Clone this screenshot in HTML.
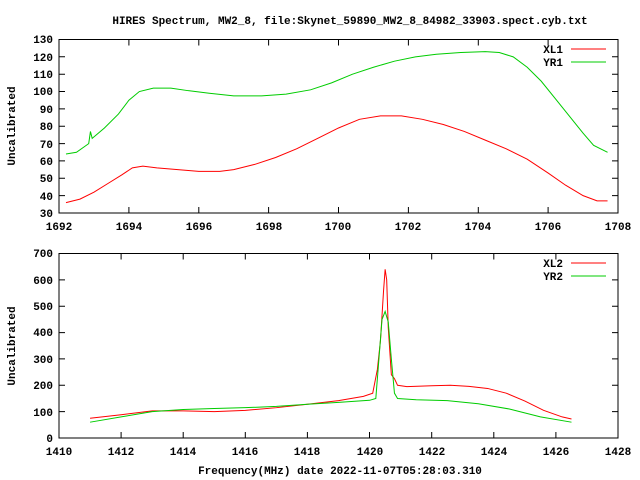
<!DOCTYPE html>
<html><head><style>body{margin:0;background:#fff}svg{display:block}text{font-family:"Liberation Mono",monospace;font-weight:bold;font-size:11px;fill:#000}</style></head><body>
<svg width="640" height="480" xmlns="http://www.w3.org/2000/svg">
<text x="350" y="24" text-anchor="middle">HIRES Spectrum, MW2_8, file:Skynet_59890_MW2_8_84982_33903.spect.cyb.txt</text>
<!-- top frame -->
<rect x="59" y="39.5" width="559" height="173.5" fill="none" stroke="#000"/>
<g stroke="#000">
<path d="M59 195.6h6M612 195.6h6M59 178.3h6M612 178.3h6M59 160.9h6M612 160.9h6M59 143.6h6M612 143.6h6M59 126.2h6M612 126.2h6M59 108.9h6M612 108.9h6M59 91.5h6M612 91.5h6M59 74.2h6M612 74.2h6M59 56.8h6M612 56.8h6"/>
<path d="M128.9 213v-6M128.9 39.5v6M198.8 213v-6M198.8 39.5v6M268.6 213v-6M268.6 39.5v6M338.5 213v-6M338.5 39.5v6M408.4 213v-6M408.4 39.5v6M478.3 213v-6M478.3 39.5v6M548.1 213v-6M548.1 39.5v6"/>
</g>
<g text-anchor="end">
<text x="53" y="217">30</text><text x="53" y="200">40</text><text x="53" y="182">50</text><text x="53" y="165">60</text><text x="53" y="148">70</text><text x="53" y="130">80</text><text x="53" y="113">90</text><text x="53" y="95">100</text><text x="53" y="78">110</text><text x="53" y="61">120</text><text x="53" y="43">130</text>
</g>
<g text-anchor="middle">
<text x="59" y="230">1692</text><text x="129" y="230">1694</text><text x="199" y="230">1696</text><text x="269" y="230">1698</text><text x="338" y="230">1700</text><text x="408" y="230">1702</text><text x="478" y="230">1704</text><text x="548" y="230">1706</text><text x="618" y="230">1708</text>
</g>
<text transform="translate(15,126) rotate(-90)" text-anchor="middle">Uncalibrated</text>
<text x="563" y="53" text-anchor="end">XL1</text><path d="M571 49h35" stroke="#f00"/>
<text x="563" y="66" text-anchor="end">YR1</text><path d="M571 62h35" stroke="#0c0"/>
<g transform="translate(59,213) scale(34.94,-1.735) translate(-1692,-30)" fill="none">
<polyline vector-effect="non-scaling-stroke" stroke="#f00" points="1692.2,36 1692.6,38 1693,42 1693.4,47 1693.8,52 1694.1,56 1694.4,57 1694.8,56 1695.4,55 1696,54 1696.6,54 1697,55 1697.6,58 1698.2,62 1698.8,67 1699.4,73 1700,79 1700.6,84 1701.2,86 1701.8,86 1702.4,84 1703,81 1703.6,77 1704.2,72 1704.8,67 1705.4,61 1706,53 1706.5,46 1707,40 1707.4,37 1707.7,37"/>
<polyline vector-effect="non-scaling-stroke" stroke="#0c0" points="1692.2,64 1692.5,65 1692.85,70 1692.9,77 1692.95,73 1693.3,79 1693.7,87 1694,95 1694.3,100 1694.7,102 1695.2,102 1695.7,100.5 1696.3,99 1697,97.5 1697.8,97.5 1698.5,98.5 1699.2,101 1699.8,105 1700.4,110 1701,114 1701.6,117.5 1702.2,120 1702.8,121.5 1703.5,122.5 1704.2,123 1704.6,122.5 1705,120 1705.4,114 1705.8,106 1706.2,96 1706.6,86 1707,76 1707.3,69 1707.7,65"/>
</g>
<!-- bottom frame -->
<rect x="59" y="253.5" width="559" height="184.5" fill="none" stroke="#000"/>
<g stroke="#000">
<path d="M59 411.6h6M612 411.6h6M59 385.3h6M612 385.3h6M59 358.9h6M612 358.9h6M59 332.6h6M612 332.6h6M59 306.2h6M612 306.2h6M59 279.9h6M612 279.9h6"/>
<path d="M121.1 438v-6M121.1 253.5v6M183.2 438v-6M183.2 253.5v6M245.3 438v-6M245.3 253.5v6M307.4 438v-6M307.4 253.5v6M369.5 438v-6M369.5 253.5v6M431.7 438v-6M431.7 253.5v6M493.8 438v-6M493.8 253.5v6M555.9 438v-6M555.9 253.5v6"/>
</g>
<g text-anchor="end">
<text x="53" y="442">0</text><text x="53" y="416">100</text><text x="53" y="389">200</text><text x="53" y="363">300</text><text x="53" y="336">400</text><text x="53" y="310">500</text><text x="53" y="284">600</text><text x="53" y="257">700</text>
</g>
<g text-anchor="middle">
<text x="59" y="455">1410</text><text x="121" y="455">1412</text><text x="183" y="455">1414</text><text x="245" y="455">1416</text><text x="307" y="455">1418</text><text x="370" y="455">1420</text><text x="432" y="455">1422</text><text x="494" y="455">1424</text><text x="556" y="455">1426</text><text x="618" y="455">1428</text>
</g>
<text transform="translate(15,346) rotate(-90)" text-anchor="middle">Uncalibrated</text>
<text x="340" y="474" text-anchor="middle">Frequency(MHz) date 2022-11-07T05:28:03.310</text>
<text x="563" y="267" text-anchor="end">XL2</text><path d="M571 263h35" stroke="#f00"/>
<text x="563" y="280" text-anchor="end">YR2</text><path d="M571 276h35" stroke="#0c0"/>
<g transform="translate(59,438) scale(31.06,-0.2636) translate(-1410,0)" fill="none">
<polyline vector-effect="non-scaling-stroke" stroke="#f00" points="1411,75 1412,88 1413,103 1414,103 1415,100 1416,105 1417,115 1418,128 1419,142 1419.8,158 1420.1,170 1420.25,260 1420.35,370 1420.45,560 1420.5,640 1420.55,600 1420.6,420 1420.7,240 1420.8,225 1420.9,200 1421.2,195 1422,198 1422.6,200 1423.2,196 1423.8,188 1424.4,170 1425,140 1425.6,105 1426.2,80 1426.5,72"/>
<polyline vector-effect="non-scaling-stroke" stroke="#0c0" points="1411,60 1412,80 1413,100 1414,108 1415,112 1416,115 1417,120 1418,128 1419,135 1420,143 1420.2,150 1420.3,300 1420.4,450 1420.5,480 1420.6,440 1420.7,300 1420.8,170 1420.9,150 1421.5,145 1422.5,142 1423.5,130 1424.5,110 1425.5,80 1426.5,60"/>
</g>
</svg>
</body></html>
